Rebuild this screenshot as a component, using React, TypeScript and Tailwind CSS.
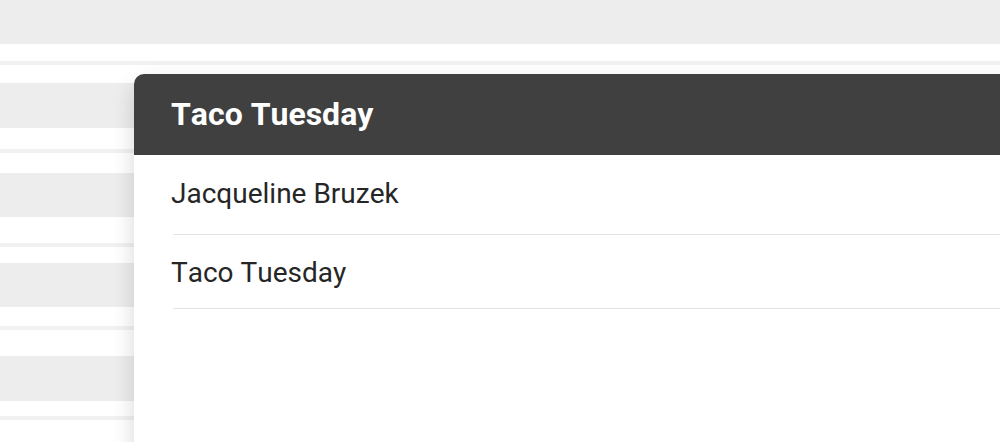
import React from "react";

const STRIPES: { kind: "bar" | "line" | "block"; mt: string; h: string }[] = [
  { kind: "line", mt: "mt-[17px]", h: "h-[4px]" },
  { kind: "block", mt: "mt-[18px]", h: "h-[45px]" },
  { kind: "line", mt: "mt-[21px]", h: "h-[4px]" },
  { kind: "block", mt: "mt-[20px]", h: "h-[44px]" },
  { kind: "line", mt: "mt-[26px]", h: "h-[4px]" },
  { kind: "block", mt: "mt-[16px]", h: "h-[44px]" },
  { kind: "line", mt: "mt-[19px]", h: "h-[4px]" },
  { kind: "block", mt: "mt-[26px]", h: "h-[45px]" },
  { kind: "line", mt: "mt-[15px]", h: "h-[4px]" },
];

const ROWS = [
  { label: "Jacqueline Bruzek", pad: "pt-[23px] pb-[24px]" },
  { label: "Taco Tuesday", pad: "pt-[22px] pb-[19px]" },
];

export default function App() {
  return (
    <div
      className="relative h-[442px] w-full overflow-hidden bg-white [font-kerning:none]"
      style={{ fontFamily: "Roboto, 'Liberation Sans', sans-serif" }}
    >
      {/* faded list behind the panel */}
      <div className="flex flex-col">
        <div className="h-[44px] bg-[#ededed]" />
        {STRIPES.map((s, i) => (
          <div
            key={i}
            className={`${s.mt} ${s.h} ${s.kind === "line" ? "bg-[#f1f1f1]" : "bg-[#ededed]"}`}
          />
        ))}
      </div>

      <section className="absolute left-[134px] top-[74px] -right-10 -bottom-10 rounded-tl-[10px] bg-white shadow-[0_10px_22px_rgba(0,0,0,0.16)]">
        <header className="h-[81px] rounded-tl-[10px] bg-[#404040] pl-[37px] pt-[21px]">
          <h1 className="text-[32px] font-bold leading-[38px] text-white">Taco Tuesday</h1>
        </header>
        <ul className="pl-[39px]">
          {ROWS.map((r) => (
            <li
              key={r.label}
              className={`${r.pad} border-b border-[#e3e3e3] text-[28px] leading-8 text-[#262626]`}
            >
              <span className="-ml-[2px]">{r.label}</span>
            </li>
          ))}
        </ul>
      </section>
    </div>
  );
}
